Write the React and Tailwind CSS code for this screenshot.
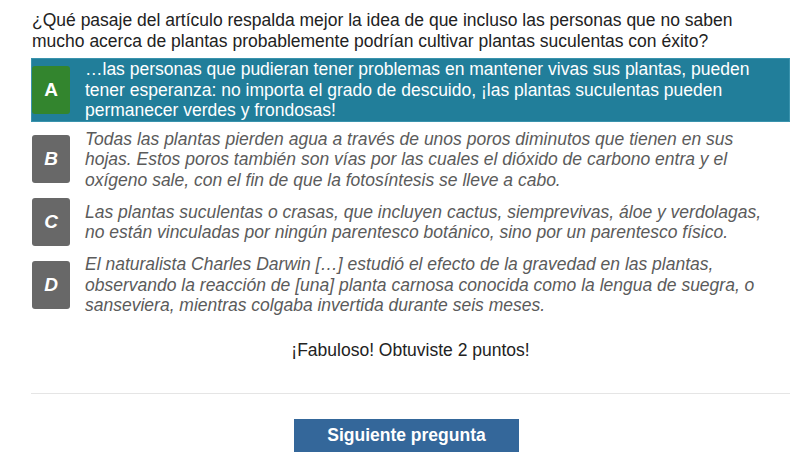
const OPTIONS = [
  {
    letter: 'A',
    text: '…las personas que pudieran tener problemas en mantener vivas sus plantas, pueden tener esperanza: no importa el grado de descuido, ¡las plantas suculentas pueden permanecer verdes y frondosas!',
    selected: true,
  },
  {
    letter: 'B',
    text: 'Todas las plantas pierden agua a través de unos poros diminutos que tienen en sus hojas. Estos poros también son vías por las cuales el dióxido de carbono entra y el oxígeno sale, con el fin de que la fotosíntesis se lleve a cabo.',
  },
  {
    letter: 'C',
    text: 'Las plantas suculentas o crasas, que incluyen cactus, siemprevivas, áloe y verdolagas, no están vinculadas por ningún parentesco botánico, sino por un parentesco físico.',
  },
  {
    letter: 'D',
    text: 'El naturalista Charles Darwin […] estudió el efecto de la gravedad en las plantas, observando la reacción de [una] planta carnosa conocida como la lengua de suegra, o sanseviera, mientras colgaba invertida durante seis meses.',
  },
]

function Option({ letter, text, selected }) {
  return (
    <div
      className={`flex items-center border ${selected ? 'bg-[#217e9a] border-[#3a93ad]' : 'border-transparent'}`}
    >
      <div
        className={`flex-shrink-0 w-[38px] h-[48px] rounded-[3px] flex items-center justify-center text-white font-bold text-[19px] ${
          selected ? 'bg-[#33852e]' : 'bg-[#686868] italic'
        }`}
      >
        {letter}
      </div>
      <p
        className={`ml-[15px] pr-[16px] text-[17.5px] leading-[20.5px] ${
          selected ? 'text-white' : 'text-[#5b5b5b] italic'
        }`}
      >
        {text}
      </p>
    </div>
  )
}

export default function App() {
  return (
    <div
      className="bg-white min-h-[457px] pl-[31px] pr-[16px] pt-[10px]"
      style={{ fontFamily: "'Liberation Sans', Arial, sans-serif" }}
    >
      {/* Question */}
      <p className="text-[17.5px] leading-[21px] text-[#222] pl-px pr-[16px]">
        ¿Qué pasaje del artículo respalda mejor la idea de que incluso las personas que no saben mucho acerca de plantas probablemente podrían cultivar plantas suculentas con éxito?
      </p>

      {/* Options */}
      <div className="mt-[6px] flex flex-col gap-[6px]">
        {OPTIONS.map(o => (
          <Option key={o.letter} {...o} />
        ))}
      </div>

      {/* Feedback */}
      <p className="mt-[23px] text-center text-[17.5px] leading-[21px] text-[#222]">
        ¡Fabuloso! Obtuviste 2 puntos!
      </p>

      <div className="mt-[32px] border-t border-[#e5e5e5]" />

      <div className="flex justify-center mt-[25px] pr-[8px]">
        <button className="w-[225px] h-[33px] bg-[#34679a] text-white font-bold text-[17.5px]">
          Siguiente pregunta
        </button>
      </div>
    </div>
  )
}
